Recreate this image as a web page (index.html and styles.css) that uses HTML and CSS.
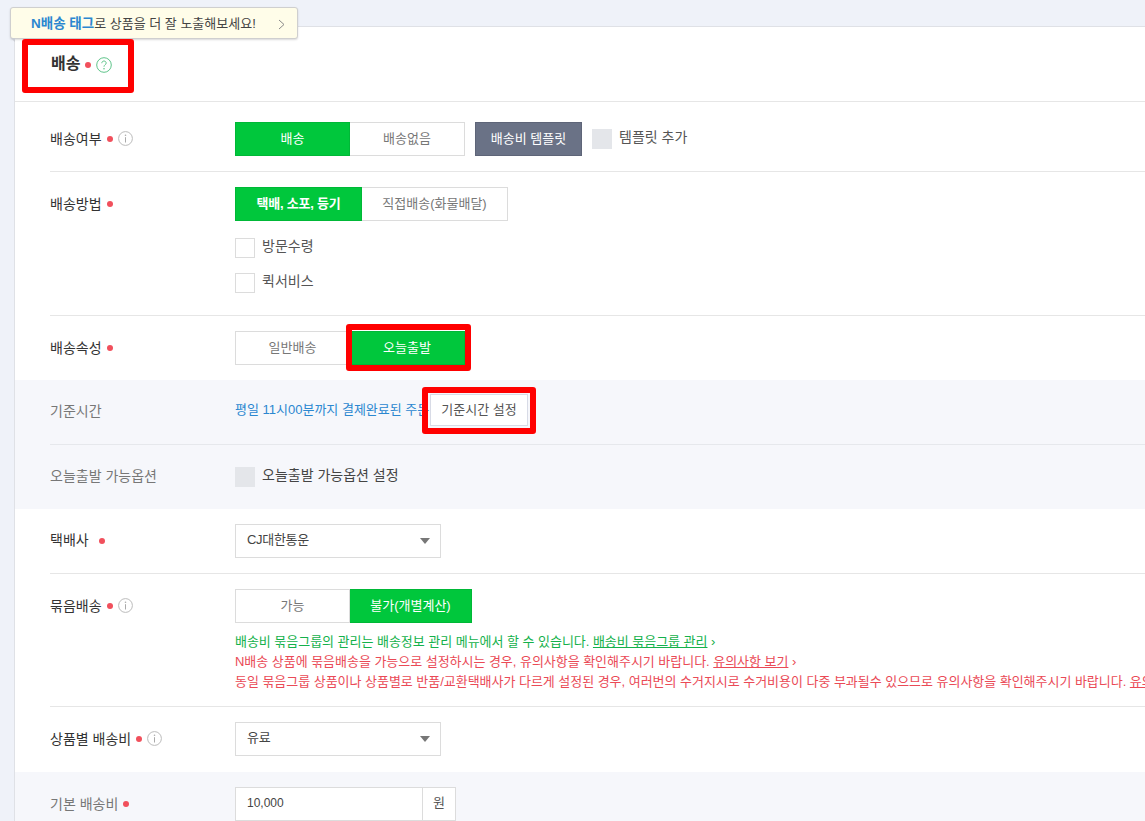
FILE: index.html
```html
<!DOCTYPE html>
<html lang="ko">
<head>
<meta charset="utf-8">
<title>배송</title>
<link rel="stylesheet" href="styles.css">
</head>
<body>
<div class="page">
  <div class="tip"><span><b>N배송 태그</b>로 상품을 더 잘 노출해보세요!</span>
    <svg class="tip-arrow" width="7" height="11" viewBox="0 0 7 11"><path d="M1 1l5 4.5L1 10" fill="none" stroke="#8a8a8a" stroke-width="1"/></svg>
  </div>
  <section class="panel">
    <header class="head">
      <h2>배송</h2><i class="dot"></i>
      <svg class="ico" width="16" height="16" viewBox="0 0 16 16"><circle cx="8" cy="8" r="7.3" fill="none" stroke="#5fc48a"/><path d="M5.8 6.2C5.8 4.9 6.8 4 8 4s2.2.9 2.2 2.1c0 1.6-2.2 1.7-2.2 3.6" fill="none" stroke="#5fc48a"/><circle cx="8" cy="11.7" r=".8" fill="#5fc48a"/></svg>
    </header>

    <div class="row r1">
      <div class="label">배송여부<i class="dot"></i><svg class="ico" width="15" height="15" viewBox="0 0 15 15"><circle cx="7.5" cy="7.5" r="6.9" fill="none" stroke="#bbb"/><path d="M7.5 6.2v5.3" stroke="#aaa"/><circle cx="7.5" cy="4.2" r=".8" fill="#aaa"/></svg></div>
      <div class="ctl">
        <div class="seg"><button class="btn on w115">배송</button><button class="btn w115">배송없음</button></div>
        <button class="btn dark">배송비 템플릿</button>
        <label class="check dis gap10"><i class="box"></i>템플릿 추가</label>
      </div>
    </div>

    <div class="row r2">
      <div class="label">배송방법<i class="dot"></i></div>
      <div class="stack">
        <div class="seg"><button class="btn on strong w127">택배, 소포, 등기</button><button class="btn w146">직접배송(화물배달)</button></div>
        <label class="check first"><i class="box"></i>방문수령</label>
        <label class="check"><i class="box"></i>퀵서비스</label>
      </div>
    </div>

    <div class="row r3 last">
      <div class="label">배송속성<i class="dot"></i></div>
      <div class="seg"><button class="btn w115">일반배송</button><button class="btn on w115">오늘출발</button></div>
    </div>

    <div class="tinted">
      <div class="row r4">
        <div class="label sub">기준시간</div>
        <div class="ctl tight">
          <span class="blue">평일 11시00분까지 결제완료된 주문</span>
          <button class="btn setbtn">기준시간 설정</button>
        </div>
      </div>
      <div class="row r5 last">
        <div class="label sub">오늘출발 가능옵션</div>
        <label class="check dis dk mid"><i class="box"></i>오늘출발 가능옵션 설정</label>
      </div>
    </div>

    <div class="row r6">
      <div class="label">택배사<i class="dot wide"></i></div>
      <div class="select">CJ대한통운<i class="caret"></i></div>
    </div>

    <div class="row r7">
      <div class="label">묶음배송<i class="dot"></i><svg class="ico" width="15" height="15" viewBox="0 0 15 15"><circle cx="7.5" cy="7.5" r="6.9" fill="none" stroke="#bbb"/><path d="M7.5 6.2v5.3" stroke="#aaa"/><circle cx="7.5" cy="4.2" r=".8" fill="#aaa"/></svg></div>
      <div class="stack-help">
        <div class="seg"><button class="btn w115">가능</button><button class="btn on w122">불가(개별계산)</button></div>
        <div class="help">
          <p class="green">배송비 묶음그룹의 관리는 배송정보 관리 메뉴에서 할 수 있습니다. <u>배송비 묶음그룹 관리</u> ›</p>
          <p class="red">N배송 상품에 묶음배송을 가능으로 설정하시는 경우, 유의사항을 확인해주시기 바랍니다. <u>유의사항 보기</u> ›</p>
          <p class="red">동일 묶음그룹 상품이나 상품별로 반품/교환택배사가 다르게 설정된 경우, 여러번의 수거지시로 수거비용이 다중 부과될수 있으므로 유의사항을 확인해주시기 바랍니다. <u>유의사항 보기</u> ›</p>
        </div>
      </div>
    </div>

    <div class="row r8 last">
      <div class="label">상품별 배송비<i class="dot"></i><svg class="ico" width="15" height="15" viewBox="0 0 15 15"><circle cx="7.5" cy="7.5" r="6.9" fill="none" stroke="#bbb"/><path d="M7.5 6.2v5.3" stroke="#aaa"/><circle cx="7.5" cy="4.2" r=".8" fill="#aaa"/></svg></div>
      <div class="select">유료<i class="caret"></i></div>
    </div>

    <div class="tinted">
      <div class="row r9 last">
        <div class="label sub">기본 배송비<i class="dot"></i></div>
        <div class="amount"><span class="val">10,000</span><span class="unit">원</span></div>
      </div>
    </div>
  </section>

  <div class="mark m1"></div>
  <div class="mark m2"></div>
  <div class="mark m3"></div>
</div>
</body>
</html>
```
FILE: styles.css
```css
* { box-sizing: border-box; }
html, body { margin: 0; height: 100%; overflow: hidden; }
body {
  background: #eff2f9;
  font-family: "Liberation Sans", "Noto Sans CJK KR", sans-serif;
  font-size: 13px;
  color: #333;
}
.page { position: relative; height: 821px; padding: 26px 0 0 14px; overflow: hidden; }
.panel { background: #fff; border-top: 1px solid #dfe1e6; border-left: 1px solid #dfe1e6; min-height: 795px; }

.head { height: 75px; padding-left: 36px; display: flex; align-items: center; border-bottom: 1px solid #e6e6e6; }
.head h2 { margin: 0 0 1px; font-size: 16px; font-weight: 700; color: #333; line-height: 20px; }
.head .dot { margin: 2px 5px 0 5px; }

.dot { display: inline-block; width: 6px; height: 6px; border-radius: 50%; background: #f1505c; margin: 3px 5px 0 5px; flex: none; }
.dot.wide { margin-left: 10px; }
.ico { flex: none; display: block; margin-top: 2px; }

.row { margin-left: 35px; display: flex; border-bottom: 1px solid #e6e6e6; padding-top: 15px; }
.row.last { border-bottom: 0; }
.r1 { height: 70px; padding-top: 20px; }
.r2 { height: 144px; }
.r3 { height: 64px; }
.r4 { height: 65px; padding-top: 14px; }
.r5 { height: 64px; }
.r6 { height: 65px; }
.r7 { height: 133px; }
.r8 { height: 65px; }
.r9 { height: 64px; }
.tinted { background: #f6f7fb; }
.tinted .row { border-color: #e6e8ec; }

.label { width: 185px; flex: none; height: 34px; padding-bottom: 3px; display: flex; align-items: center; font-size: 14px; color: #333; white-space: nowrap; }
.r5 .label, .r6 .label { padding-bottom: 4px; }
.label.sub { color: #777; }
.ctl { display: flex; align-items: center; height: 34px; }
.ctl.tight { height: 32px; }
.stack { display: flex; flex-direction: column; gap: 15px; }
.stack-help { min-width: 0; flex: none; }
.seg { display: flex; height: 34px; }

.btn { height: 34px; padding: 0 0 3px; border: 1px solid #dcdcdc; background: #fff; color: #777; font: inherit; font-size: 13px; white-space: nowrap; }
.seg .btn + .btn { border-left: 0; }
.btn.on { background: #00c73c; border-color: #00b837; color: #fff; }
.btn.strong { font-weight: 700; letter-spacing: -.2px; }
.w115 { width: 115px; }
.w122 { width: 122px; }
.w127 { width: 127px; }
.w146 { width: 146px; }
.btn.dark { width: 107px; margin-left: 10px; background: #6a7286; border-color: #5e6578; color: #fff; }
.btn.setbtn { width: 98px; height: 32px; margin-left: 0; border-color: #d8dbe6; color: #555; position: relative; }

.check { display: flex; align-items: flex-start; height: 20px; line-height: 17px; font-size: 14px; color: #555; gap: 7px; }
.check.first { margin-top: 2px; }
.check.gap10 { margin-left: 10px; }
.check.mid { margin-top: 7px; }
.check.dk { color: #444; }
.box { width: 20px; height: 20px; background: #fff; border: 1px solid #dcdcdc; flex: none; display: block; }
.dis .box { background: #e4e6ea; border-color: #e4e6ea; }

.blue { color: #2b87d0; font-size: 13px; width: 195px; flex: none; overflow: hidden; white-space: nowrap; padding-bottom: 3px; }

.select { position: relative; width: 206px; height: 34px; border: 1px solid #dcdcdc; background: #fff; padding-left: 11px; line-height: 29px; font-size: 13px; letter-spacing: -.3px; color: #444; }
.caret { position: absolute; right: 10px; top: 13px; border: 5px solid transparent; border-top: 6px solid #777; border-bottom: 0; }

.help { margin-top: 9px; }
.help p { margin: 0; height: 20px; line-height: 20px; font-size: 13px; letter-spacing: -.03px; white-space: nowrap; }
.green { color: #14b14b; }
.red { color: #ea4a56; }

.amount { display: flex; height: 34px; width: 221px; border: 1px solid #dcdcdc; background: #fff; font-size: 12px; }
.val { flex: 1; padding-left: 11px; line-height: 30px; color: #444; }
.unit { width: 33px; border-left: 1px solid #dcdcdc; text-align: center; line-height: 29px; color: #555; font-size: 13px; }

.tip { position: absolute; left: 10px; top: 7px; width: 288px; height: 32px; background: #fffde9; border: 1px solid #cfcfcf; border-radius: 3px; box-shadow: 0 1px 2px rgba(0,0,0,.15); display: flex; align-items: center; padding-left: 20px; font-size: 13px; color: #444; z-index: 2; }
.tip::after { content: ""; position: absolute; left: 0; top: 30px; border-top: 4px solid #c9ccd2; border-left: 4px solid transparent; }
.tip span { margin-top: -3px; }
.tip b { color: #2b87d0; font-size: 13.5px; }
.tip-arrow { position: absolute; right: 12px; top: 11px; }

.mark { position: absolute; border: 6px solid #f00; border-radius: 3px; z-index: 3; }
.m1 { left: 22px; top: 39px; width: 112px; height: 54px; }
.m2 { left: 346px; top: 324px; width: 125px; height: 47px; }
.m3 { left: 422px; top: 387px; width: 114px; height: 47px; }
```
